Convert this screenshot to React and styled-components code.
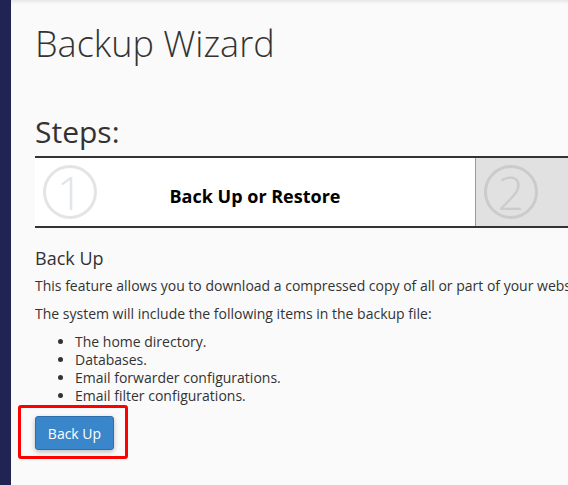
import React from 'react'
import styled, { createGlobalStyle } from 'styled-components'

const Global = createGlobalStyle`
    html, body {
        margin: 0;
        padding: 0;
        height: 100%;
        overflow: hidden;
        background: #fafafa;
    }

    #root {
        height: 100%;
    }
`

const Layout = styled.div`
    display: flex;
    height: 485px;
    font-family: "Open Sans", "Liberation Sans", sans-serif;
    color: #333;
`

const Sidebar = styled.div`
    width: 11px;
    flex-shrink: 0;
    background: #1f2452;
`

const Main = styled.main`
    flex: 1;
    min-width: 0;
    padding: 0 0 0 24px;
    box-shadow: inset 0 4px 4px -3px rgba(0, 0, 0, 0.12);
    overflow: hidden;
`

const Title = styled.h1`
    margin: 19px 0 0 0;
    font-size: 36px;
    font-weight: 300;
    line-height: 50px;
`

const StepsTitle = styled.h2`
    margin: 43px 0 4px 0;
    font-size: 30px;
    font-weight: 400;
    line-height: 40px;
`

const Steps = styled.div`
    display: flex;
    width: 600px;
    height: 68px;
    border-top: 2px solid #333;
    border-bottom: 2px solid #333;
`

const Step = styled.div`
    display: flex;
    align-items: center;
    position: relative;
    width: ${p => p.$width}px;
    flex-shrink: 0;
    padding-left: 8px;
    box-sizing: border-box;
    background: ${p => (p.$active ? '#fff' : '#e1e1e1')};
    border-right: ${p => (p.$active ? '1px solid #999' : 'none')};
`

const Circle = styled.div`
    width: 54px;
    height: 54px;
    box-sizing: border-box;
    border: 3.5px solid ${p => p.$color};
    border-radius: 50%;
    display: flex;
    align-items: center;
    justify-content: center;
    color: ${p => p.$color};
    font-family: "Open Sans", "Liberation Sans", sans-serif;
    font-weight: 300;
    font-size: 46px;
    line-height: 1;
    flex-shrink: 0;
`

const StepLabel = styled.span`
    position: absolute;
    left: 0;
    right: 0;
    top: 50%;
    margin-top: -9px;
    text-align: center;
    font-size: 18px;
    line-height: 26px;
    font-weight: 700;
    color: #000;
`

const Section = styled.section`
    padding-top: 17px;
`

const SectionTitle = styled.h3`
    margin: 0;
    font-size: 18px;
    font-weight: 400;
    line-height: 26px;
`

const Text = styled.p`
    margin: ${p => (p.$first ? '5px' : '8px')} 0 0 0;
    font-size: 14px;
    line-height: 20px;
    white-space: nowrap;
`

const Items = styled.ul`
    margin: 9px 0 0 0;
    padding-left: 40px;
    font-size: 14px;
    line-height: 18px;
`

const ButtonWrap = styled.div`
    position: relative;
    display: inline-block;
    margin-top: 11px;
`

const Highlight = styled.div`
    position: absolute;
    left: -17px;
    top: -11px;
    width: 110px;
    height: 54px;
    box-sizing: border-box;
    border: 3px solid #f00;
    border-radius: 3px;
    pointer-events: none;
`

const Button = styled.button`
    display: block;
    width: 79px;
    height: 34px;
    padding: 0;
    background: #3a86cb;
    border: 1px solid #2e6fab;
    border-radius: 3px;
    color: #fff;
    font-family: "Open Sans", "Liberation Sans", sans-serif;
    font-size: 14px;
    box-shadow: 0 2px 5px rgba(0, 0, 0, 0.25);
`

const items = [
    'The home directory.',
    'Databases.',
    'Email forwarder configurations.',
    'Email filter configurations.',
]

export default function App() {
    return (
        <Layout>
            <Global />
            <Sidebar />
            <Main>
                <Title>Backup Wizard</Title>
                <StepsTitle>Steps:</StepsTitle>
                <Steps>
                    <Step $active $width={441}>
                        <Circle $color="#e4e4e4">1</Circle>
                        <StepLabel>Back Up or Restore</StepLabel>
                    </Step>
                    <Step $width={200}>
                        <Circle $color="#cbcbcb">2</Circle>
                    </Step>
                </Steps>
                <Section>
                    <SectionTitle>Back Up</SectionTitle>
                    <Text $first>This feature allows you to download a compressed copy of all or part of your website.</Text>
                    <Text>The system will include the following items in the backup file:</Text>
                    <Items>
                        {items.map(item => (
                            <li key={item}>{item}</li>
                        ))}
                    </Items>
                    <ButtonWrap>
                        <Button>Back Up</Button>
                        <Highlight />
                    </ButtonWrap>
                </Section>
            </Main>
        </Layout>
    )
}
